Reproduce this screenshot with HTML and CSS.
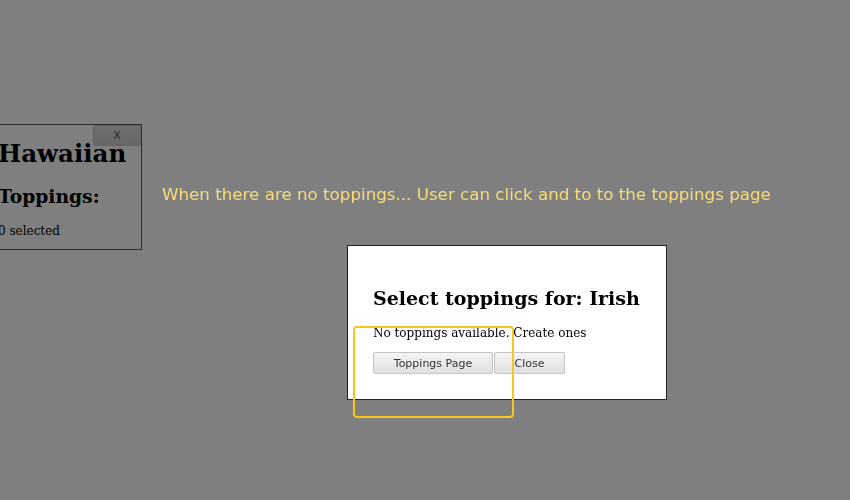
FILE: index.html
```html
<!DOCTYPE html>
<html>
<head>
<meta charset="utf-8">
<link rel="stylesheet" href="styles.css">
</head>
<body>
<main class="page">
  <div class="pizza-card">
    <button class="card-close">X</button>
    <h2 class="pizza-name">Hawaiian</h2>
    <h3 class="toppings-title">Toppings:</h3>
    <p class="toppings-count">0 selected</p>
  </div>
</main>
<div class="overlay">
  <p class="note">When there are no toppings... User can click and to to the toppings page</p>
  <div class="modal">
    <h3 class="modal-title">Select toppings for: Irish</h3>
    <p class="modal-text">No toppings available. Create ones</p>
    <div class="modal-actions">
      <button class="btn btn-wide">Toppings Page</button>
      <button class="btn btn-close">Close</button>
    </div>
  </div>
  <div class="highlight"></div>
</div>
</body>
</html>
```

FILE: styles.css
```css
html, body {
  margin: 0;
  padding: 0;
  width: 850px;
  height: 500px;
  overflow: hidden;
  background: #fff;
  font-family: "DejaVu Serif", serif;
}

.page {
  padding-top: 124px;
}

.pizza-card {
  position: relative;
  width: 151px;
  height: 126px;
  margin-left: -9px;
  border: 1px solid #5a5a5a;
  box-sizing: border-box;
  padding: 0 0 0 6px;
}

.card-close {
  position: absolute;
  top: 0;
  right: 0;
  width: 48px;
  height: 21px;
  border: 1px solid #c4c4c4;
  border-radius: 2px;
  background: linear-gradient(#dcdcdc, #cfcfcf);
  font: 11px "DejaVu Sans", sans-serif;
  color: #555;
  padding: 0;
}

.pizza-name {
  margin: 14px 0 0;
  font-size: 24.5px;
  font-weight: bold;
  line-height: 30px;
}

.toppings-title {
  margin: 16px 0 0;
  font-size: 18.7px;
  font-weight: bold;
  line-height: 22px;
}

.toppings-count {
  margin: 17px 0 0;
  font-size: 12px;
  line-height: 14px;
}

.overlay {
  position: fixed;
  inset: 0;
  background: rgba(0, 0, 0, 0.5);
}

.note {
  position: absolute;
  left: 162px;
  top: 184px;
  margin: 0;
  font: 16.7px "DejaVu Sans", sans-serif;
  color: #f8dc78;
  white-space: nowrap;
}

.modal {
  position: absolute;
  left: 347px;
  top: 245px;
  width: 320px;
  height: 155px;
  box-sizing: border-box;
  background: #fff;
  border: 1px solid #222;
  padding: 40px 25px 0;
}

.modal-title {
  margin: 0;
  font-size: 19px;
  font-weight: bold;
  line-height: 24px;
}

.modal-text {
  margin: 15px 0 0;
  font-size: 12px;
  line-height: 16px;
}

.modal-actions {
  display: flex;
  gap: 1px;
  margin-top: 11px;
}

.btn {
  height: 22px;
  padding: 0;
  border: 1px solid #c4c4c4;
  border-radius: 2px;
  background: linear-gradient(#f4f4f4, #e0e0e0);
  font: 11px "DejaVu Sans", sans-serif;
  color: #333;
}

.btn-wide { width: 120px; }
.btn-close { width: 71px; }

.highlight {
  position: absolute;
  left: 353px;
  top: 326px;
  width: 161px;
  height: 92px;
  box-sizing: border-box;
  border: 2px solid #f7c61c;
  border-radius: 4px;
}
```
